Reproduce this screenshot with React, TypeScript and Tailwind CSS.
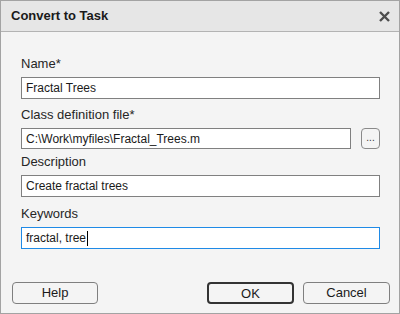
const font = { fontFamily: '"Liberation Sans", Arial, sans-serif' };

function Field({
  label,
  value,
  top,
  focused = false,
  browse = false,
  h = "h-[22px]",
}: {
  label: string;
  value: string;
  top: string;
  focused?: boolean;
  browse?: boolean;
  h?: string;
}) {
  return (
    <div className={top}>
      <div className="h-[18px] text-[13px] leading-[18px] text-[#262626]">{label}</div>
      <div className="mt-[4px] flex items-center">
        <div
          className={`flex-1 ${h} flex items-center bg-white px-[4px] text-[12px] text-[#1a1a1a] border ${
            focused ? "border-[#1f8ae6]" : "border-[#808080]"
          }`}
        >
          <span>{value}</span>
          {focused && <span className="ml-[1px] inline-block w-[1px] h-[15px] bg-black" />}
        </div>
        {browse && (
          <button className="ml-[10px] w-[19px] h-[21px] rounded-[4px] border border-[#8a8a8a] bg-[#f4f4f4] text-[10px] leading-none text-[#333] flex items-end justify-center pb-[5px]">
            ...
          </button>
        )}
      </div>
    </div>
  );
}

export default function App() {
  return (
    <div
      style={font}
      className="w-[400px] h-[314px] flex flex-col border border-[#a3a3a3] bg-[#f4f4f4] overflow-hidden"
    >
      <div className="h-[31px] shrink-0 flex items-center justify-between bg-[#e6e6e6] border-b border-[#b3b3b3] pl-[10px] pr-[9px]">
        <span className="text-[13px] font-bold text-[#1a1a1a]">Convert to Task</span>
        <svg width="11" height="11" viewBox="0 0 11 11">
          <path d="M1 1L10 10M10 1L1 10" stroke="#4d4d4d" strokeWidth="2.4" />
        </svg>
      </div>
      <div className="flex-1 flex flex-col pl-[20px] pr-[19px] pt-[23px]">
        <Field label="Name*" value="Fractal Trees" top="" />
        <Field
          label="Class definition file*"
          value="C:\Work\myfiles\Fractal_Trees.m"
          top="mt-[7px]"
          browse
          h="h-[21px]"
        />
        <Field label="Description" value="Create fractal trees" top="mt-[4px]" />
        <Field label="Keywords" value="fractal, tree" top="mt-[8px]" focused />
      </div>
      <div className="shrink-0 flex items-center pl-[11px] pr-[9px] pb-[9px] text-[13px] text-[#1a1a1a]">
        <button className="w-[86px] h-[22px] rounded-[4px] border border-[#7f7f7f] bg-[#f4f4f4]">
          Help
        </button>
        <div className="flex-1" />
        <button className="w-[87px] h-[22px] rounded-[4px] border-2 border-[#333333] bg-[#f4f4f4]">
          OK
        </button>
        <button className="ml-[9px] w-[87px] h-[22px] rounded-[4px] border border-[#7f7f7f] bg-[#f4f4f4]">
          Cancel
        </button>
      </div>
    </div>
  );
}
